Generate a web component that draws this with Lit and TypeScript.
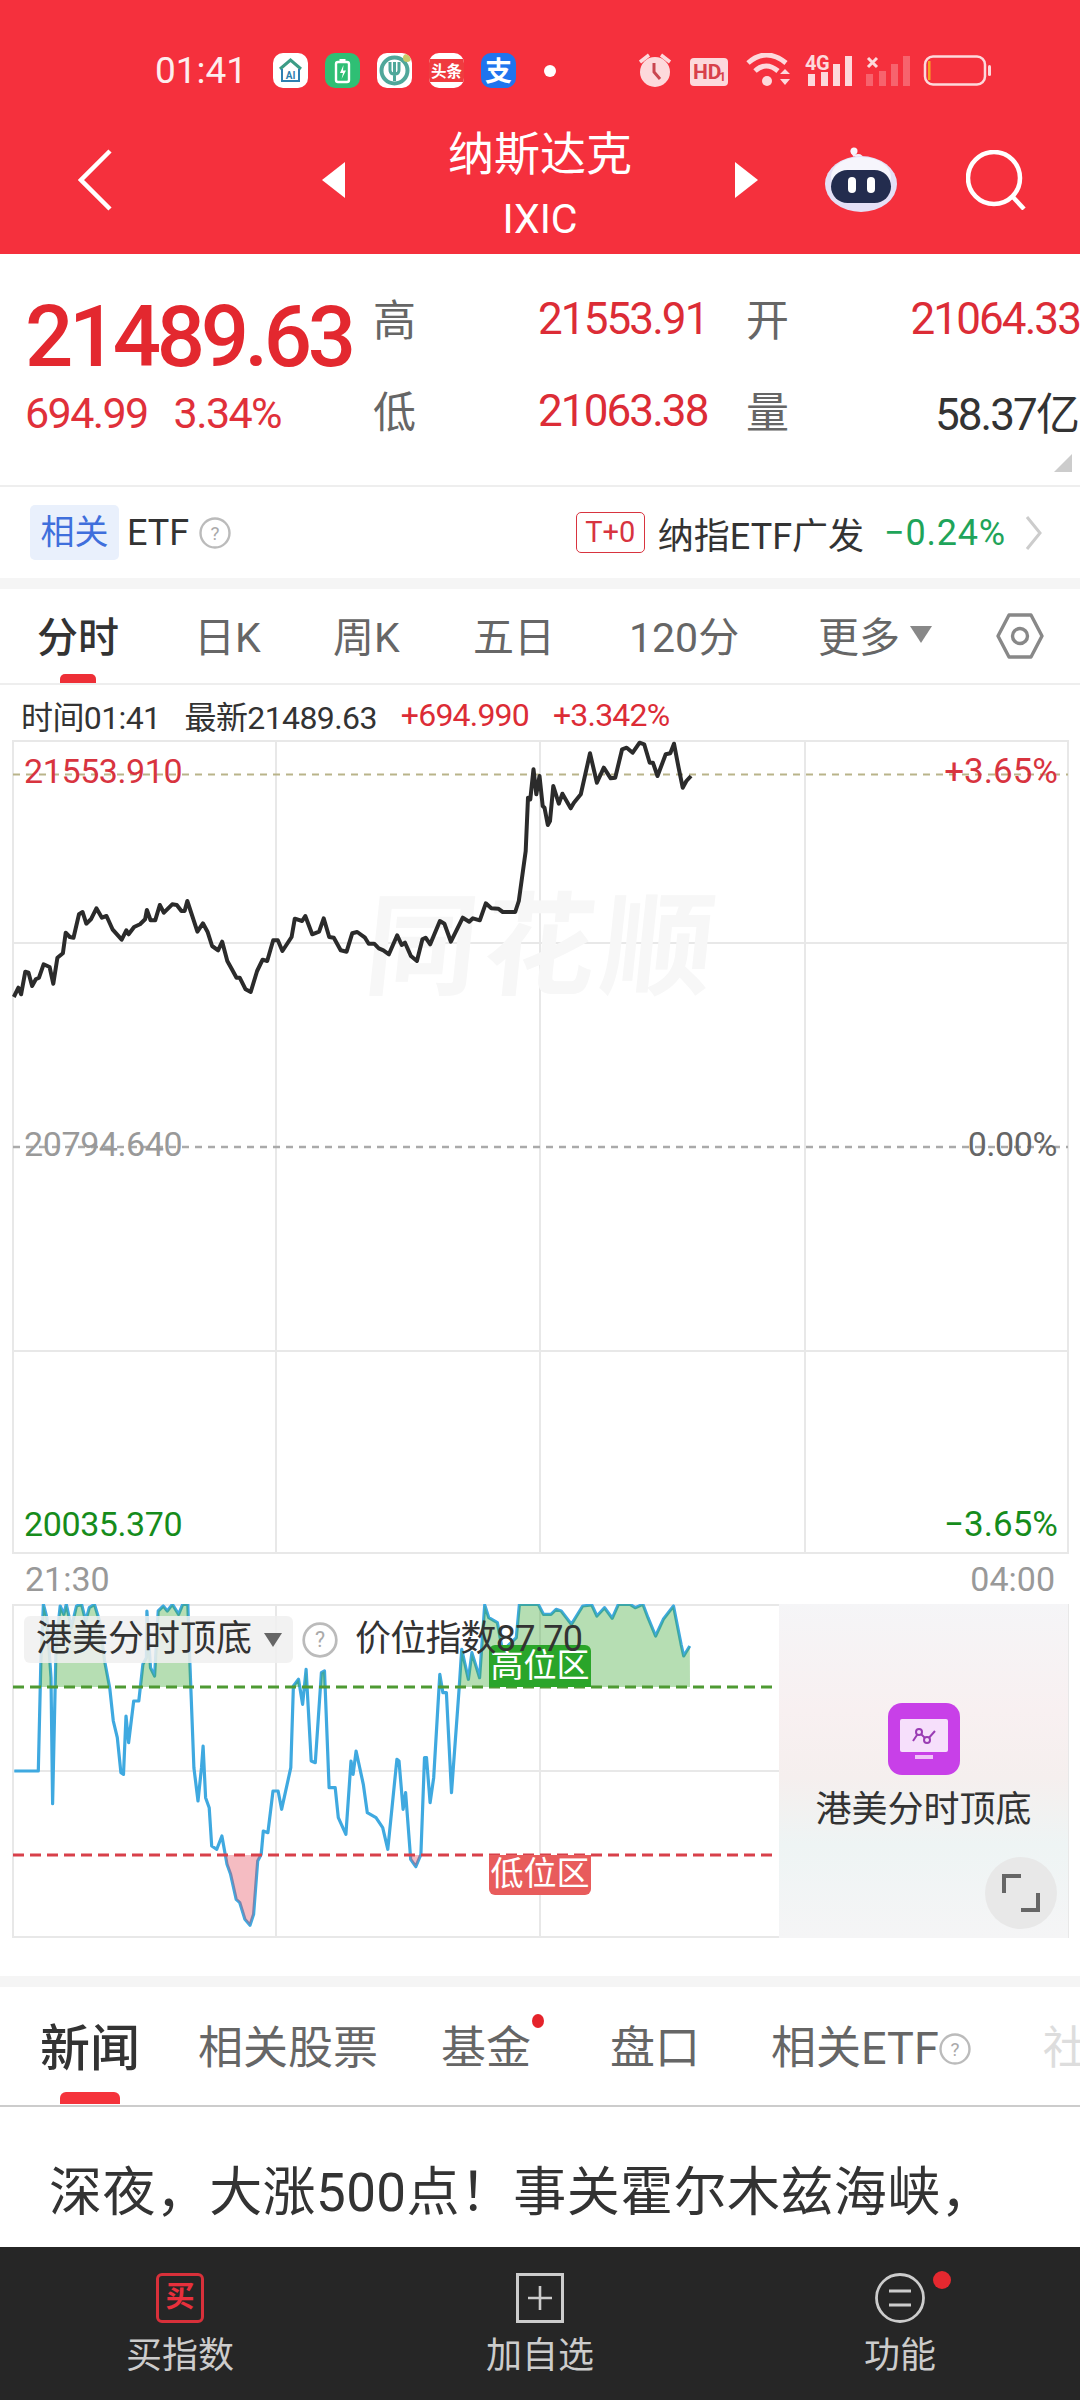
import { LitElement, css, html } from "lit";
import { customElement } from "lit/decorators.js";

// price line, sampled from the reference (x scaled 2.178, y scaled 3, from page y 720)
const PRICE = `30,828 40,800 46,820 55,752 62,755 70,795 78,775 85,770 95,730 108,738 116,788 125,710 137,697 143,635 152,648 160,650 172,580 180,573 188,608 198,595 210,562 222,590 232,585 245,625 265,656 275,628 280,640 292,618 305,610 316,595 320,567 328,598 338,598 348,552 357,575 375,550 385,552 395,570 402,570 408,540 420,590 430,632 442,607 452,632 462,675 475,688 484,662 495,720 505,745 515,770 522,770 535,805 546,813 560,750 572,716 582,720 595,658 605,658 615,690 635,648 642,593 658,600 665,585 680,640 695,632 705,592 717,648 727,650 742,688 755,692 767,637 778,633 795,650 803,668 815,668 825,682 835,688 847,700 865,643 875,672 882,665 895,705 908,720 920,655 927,650 937,670 958,600 968,608 982,662 1008,590 1022,602 1030,592 1045,598 1058,547 1070,562 1085,563 1095,573 1122,573 1130,540 1145,390 1150,230 1155,235 1162,145 1168,220 1175,165 1182,255 1186,260 1193,312 1198,300 1205,195 1217,248 1225,218 1243,262 1250,245 1265,220 1285,97 1300,185 1315,140 1330,172 1340,170 1355,85 1365,80 1378,95 1393,65 1403,70 1415,125 1422,125 1432,165 1450,100 1460,97 1468,68 1478,140 1487,200 1495,180 1505,165`;

// indicator line (x scaled 1.96, y scaled 3, from page y 1560)
const INDEX = `28,630 75,630 80,310 85,130 92,170 100,350 103,728 110,250 118,135 125,160 130,130 140,200 150,135 160,130 168,180 175,140 185,130 195,180 205,300 215,380 222,480 230,530 237,635 242,640 247,465 252,545 262,420 272,420 280,310 287,290 288,150 295,320 303,345 310,150 320,135 328,150 338,130 350,160 358,130 368,130 372,300 380,620 388,720 395,620 398,555 403,710 410,740 415,855 425,865 435,825 445,910 452,940 463,1015 470,1025 480,1075 490,1093 497,1060 505,900 512,880 516,810 525,815 535,690 545,690 552,745 570,620 575,375 585,355 593,430 600,325 610,600 618,605 630,335 636,330 645,680 657,680 663,770 678,820 688,600 692,640 698,570 712,670 720,755 737,770 750,800 760,865 778,595 782,600 790,745 795,695 805,895 815,917 825,880 832,590 836,590 843,725 850,650 862,340 868,395 875,395 885,695 900,380 905,265 918,355 925,275 940,350 950,132 958,170 975,185 985,270 1012,230 1018,130 1055,130 1065,160 1080,160 1090,145 1100,150 1120,190 1142,135 1160,132 1170,165 1185,140 1200,172 1212,130 1235,130 1245,140 1260,130 1270,170 1285,225 1300,175 1320,135 1335,250 1340,285 1352,255`;

const scalePts = (raw: string, sx: number, top: number) =>
  raw
    .split(" ")
    .map((p) => {
      const [x, y] = p.split(",").map(Number);
      return `${(x / sx).toFixed(1)},${(top + y / 3).toFixed(1)}`;
    })
    .join(" ");

const pricePts = scalePts(PRICE, 2.178, 720);
const indexPts = scalePts(INDEX, 1.96, 1560);

const help = (size: number) => html`<svg class="help" width=${size} height=${size} viewBox="0 0 32 32">
  <circle cx="16" cy="16" r="14.5" fill="none" stroke="#bbb" stroke-width="2.4"></circle>
  <text x="16" y="22.5" text-anchor="middle" font-size="19" fill="#aaa">?</text>
</svg>`;

@customElement("app-root")
export class AppRoot extends LitElement {
  static styles = css`
    :host {
      display: block;
      width: 1080px;
      height: 2400px;
      background: #fff;
      overflow: hidden;
      font-family: Roboto, "Noto Sans CJK SC", sans-serif;
      color: #333;
    }
    svg {
      display: block;
      flex: none;
    }
    .page {
      display: flex;
      flex-direction: column;
      height: 2400px;
    }
    .scroll {
      flex: 1;
      min-height: 0;
      overflow: hidden;
    }

    /* header */
    .header {
      height: 254px;
      background: #f5303d;
      color: #fff;
      display: flex;
      flex-direction: column;
    }
    .status {
      display: flex;
      align-items: center;
      height: 35px;
      margin-top: 53px;
      padding-left: 155px;
    }
    .clock {
      width: 90px;
      font-size: 37px;
      line-height: 37px;
      color: #fdeeee;
      white-space: nowrap;
    }
    .apps {
      display: flex;
      gap: 17px;
      margin-left: 28px;
    }
    .app {
      width: 35px;
      height: 35px;
      border-radius: 10px;
      overflow: hidden;
      background: #fff;
    }
    .dot {
      width: 12px;
      height: 12px;
      border-radius: 50%;
      background: #fff;
      margin-left: 28px;
    }
    .sys {
      margin-left: 83px;
    }
    .nav {
      flex: 1;
      display: flex;
      align-items: center;
      padding: 18px 0 0 78px;
    }
    .back {
      margin-right: 210px;
    }
    .title {
      align-self: flex-start;
      width: 390px;
      margin-top: 16px;
      text-align: center;
      line-height: 64px;
    }
    .title b {
      display: block;
      font-weight: 400;
      font-size: 46px;
    }
    .title span {
      display: block;
      font-size: 41px;
      padding-top: 1px;
    }
    .robot {
      margin-left: 67px;
    }
    .search {
      margin-left: 69px;
    }

    /* quote block */
    .stats {
      position: relative;
      height: 233px;
      box-sizing: border-box;
      padding: 10px 0 0 25px;
      border-bottom: 2px solid #eee;
      display: grid;
      grid-template-columns: 348px 165px 208px 1fr auto;
      grid-template-rows: 112px 72px;
      align-items: center;
    }
    .price {
      align-self: end;
      font-size: 85px;
      line-height: 78px;
      font-weight: 500;
      letter-spacing: -4.4px;
      color: #e3282f;
    }
    .change {
      display: flex;
      gap: 26px;
      padding-top: 2px;
      font-size: 43px;
      letter-spacing: -1.6px;
      color: #e0303a;
    }
    .lbl {
      font-size: 43px;
      padding-bottom: 7px;
      color: #666;
    }
    .val {
      font-size: 44px;
      padding-bottom: 2px;
      letter-spacing: -1.9px;
      color: #dc2c36;
    }
    .val.dark {
      color: #333;
      text-align: right;
      padding-right: 2px;
    }
    .corner {
      position: absolute;
      right: 8px;
      bottom: 13px;
      width: 0;
      height: 0;
      border-left: 18px solid transparent;
      border-bottom: 18px solid #ccc;
    }

    /* etf row */
    .etf {
      height: 91px;
      display: flex;
      align-items: center;
      padding: 0 38px 0 30px;
      font-size: 36px;
    }
    .chip {
      width: 89px;
      height: 55px;
      line-height: 55px;
      text-align: center;
      border-radius: 5px;
      background: #e9f0fc;
      color: #3f6fdc;
      font-size: 34px;
      margin-right: 8px;
    }
    .etf .help {
      margin-left: 10px;
    }
    .t0 {
      margin-left: auto;
      width: 69px;
      height: 41px;
      box-sizing: border-box;
      border: 1.5px solid #d8343f;
      border-radius: 5px;
      color: #d8343f;
      font-size: 29px;
      line-height: 38px;
      text-align: center;
      margin-right: 13px;
    }
    .fall {
      color: #1fa45a;
      margin: 0 19px 0 20px;
      letter-spacing: 0.8px;
    }
    .band {
      height: 11px;
      background: #f5f5f5;
      flex: none;
    }

    /* period tabs */
    .periods {
      height: 96px;
      box-sizing: border-box;
      border-bottom: 2px solid #eee;
      padding-left: 37px;
      display: grid;
      grid-template-columns: 157px 139px 140px 156px 189px 178px auto;
      align-items: center;
      font-size: 41px;
      color: #666;
    }
    .period {
      position: relative;
      display: flex;
      align-items: center;
      height: 100%;
      box-sizing: border-box;
      padding-bottom: 4px;
      white-space: nowrap;
    }
    .period.on {
      color: #333;
      font-weight: 500;
    }
    .period.on::after {
      content: "";
      position: absolute;
      left: 23px;
      bottom: 0;
      width: 36px;
      height: 9px;
      border-radius: 5px 5px 0 0;
      background: #ee2f37;
    }
    .caret {
      width: 0;
      height: 0;
      margin-left: 10px;
      border-left: 11px solid transparent;
      border-right: 11px solid transparent;
      border-top: 17px solid #888;
    }
    .readout {
      height: 55px;
      box-sizing: border-box;
      padding: 5px 0 0 21px;
      display: flex;
      align-items: center;
      gap: 24px;
      font-size: 32px;
      letter-spacing: -0.6px;
      color: #333;
    }
    .readout .up {
      letter-spacing: -0.8px;
      color: #dc2c36;
    }

    /* charts */
    .chart {
      width: 1080px;
      height: 814px;
    }
    .axis {
      height: 50px;
      display: flex;
      align-items: center;
      justify-content: space-between;
      padding: 0 25px;
      font-size: 34px;
      color: #999;
    }
    .sub {
      position: relative;
      height: 334px;
      margin-bottom: 38px;
    }
    .controls {
      position: absolute;
      left: 24px;
      top: 12px;
      height: 47px;
      display: flex;
      align-items: center;
      font-size: 36px;
      line-height: 47px;
      color: #333;
    }
    .picker {
      display: flex;
      align-items: center;
      width: 269px;
      height: 47px;
      box-sizing: border-box;
      padding-left: 12px;
      border-radius: 6px;
      background: rgba(240, 240, 240, 0.85);
    }
    .picker .caret {
      margin-left: 12px;
      border-left-width: 9px;
      border-right-width: 9px;
      border-top-width: 14px;
      border-top-color: #666;
    }
    .controls .help {
      margin: 0 17px 0 9px;
    }
    .controls span {
      letter-spacing: -0.8px;
    }
    .zone {
      position: absolute;
      left: 489px;
      width: 102px;
      text-align: center;
      font-size: 33px;
      color: #fff;
    }
    .zone.high {
      top: 41px;
      height: 42px;
      line-height: 41px;
      background: #2aa52a;
      border-radius: 6px 6px 0 0;
    }
    .zone.low {
      top: 251px;
      height: 40px;
      line-height: 38px;
      background: #e85c5c;
      border-radius: 0 0 6px 6px;
    }
    .promo {
      position: absolute;
      left: 779px;
      top: 0;
      width: 289px;
      height: 334px;
      display: flex;
      flex-direction: column;
      align-items: center;
      padding-top: 99px;
      box-sizing: border-box;
      font-size: 36px;
      color: #333;
      background: linear-gradient(180deg, #f5f5f7 0, #f8f0f1 32%, #f5efee 52%, #eef4f4 72%, #f5f5f6 100%);
    }
    .promo span {
      margin-top: 9px;
      line-height: 52px;
    }
    .expand {
      position: absolute;
      right: 11px;
      bottom: 9px;
      width: 72px;
      height: 72px;
      border-radius: 50%;
      background: #e8e8e8;
      display: flex;
      align-items: center;
      justify-content: center;
    }

    /* news */
    .news-tabs {
      position: relative;
      height: 120px;
      box-sizing: border-box;
      border-bottom: 2px solid #ccc;
      padding: 6px 0 0 40px;
      display: flex;
      align-items: center;
      font-size: 45px;
      line-height: 60px;
      color: #666;
      white-space: nowrap;
    }
    .news-tabs > span {
      position: relative;
      flex: none;
    }
    .news-tabs .on {
      font-size: 50px;
      font-weight: 500;
      color: #333;
      margin-right: 58px;
    }
    .news-tabs .on::after {
      content: "";
      position: absolute;
      left: 20px;
      bottom: -25px;
      width: 60px;
      height: 12px;
      border-radius: 6px 6px 0 0;
      background: #f5333c;
    }
    .news-tabs .fund {
      margin: 0 79px 0 63px;
    }
    .fund::after {
      content: "";
      position: absolute;
      right: -13px;
      top: -5px;
      width: 12px;
      height: 14px;
      border-radius: 50%;
      background: #e5232b;
    }
    .related {
      display: flex;
      align-items: center;
      margin-left: 71px;
    }
    .fade {
      margin-left: 72px;
      color: #ddd;
    }
    .headline {
      padding: 45px 0 0 49px;
      font-size: 53px;
      line-height: 82px;
      letter-spacing: 0.4px;
      color: #333;
      white-space: nowrap;
    }

    /* bottom bar */
    .bar {
      flex: none;
      height: 153px;
      background: #262626;
      display: grid;
      grid-template-columns: 360px 360px 360px;
      color: #ccc;
      font-size: 36px;
    }
    .bar-item {
      position: relative;
      display: flex;
      flex-direction: column;
      align-items: center;
      padding-top: 26px;
    }
    .bar-item span {
      margin-top: 8px;
      line-height: 50px;
    }
    .buy {
      width: 48px;
      height: 50px;
      box-sizing: border-box;
      border: 3px solid #d8303a;
      border-radius: 6px;
      color: #e8303c;
      font-size: 29px;
      font-weight: 700;
      line-height: 42px;
      text-align: center;
    }
    .badge {
      position: absolute;
      left: 213px;
      top: 24px;
      width: 18px;
      height: 18px;
      border-radius: 50%;
      background: #e5282f;
    }
  `;

  private statusApps() {
    return html`<div class="apps">
      <div class="app">
        <svg width="35" height="35" viewBox="0 0 35 35">
          <path d="M7 16 L17.5 7 L28 16" fill="none" stroke="#3c9c86" stroke-width="3"></path>
          <path d="M9 16 V28 H26 V16" fill="none" stroke="#2f7fb0" stroke-width="2"></path>
          <text x="17.5" y="26" text-anchor="middle" font-size="10" font-weight="700" fill="#2f7fb0">AI</text>
        </svg>
      </div>
      <div class="app" style="background:#2fbf74">
        <svg width="35" height="35" viewBox="0 0 35 35">
          <rect x="11" y="9" width="13" height="20" rx="2" fill="none" stroke="#fff" stroke-width="2.4"></rect>
          <rect x="14.5" y="6" width="6" height="3" fill="#fff"></rect>
          <path d="M18.5 12 L15 20 H18 L16.5 26 L21 17.5 H18 Z" fill="#fff"></path>
        </svg>
      </div>
      <div class="app">
        <svg width="35" height="35" viewBox="0 0 35 35">
          <circle cx="17.5" cy="17.5" r="13" fill="none" stroke="#4fa79a" stroke-width="4"></circle>
          <path d="M13 9 V17 Q13 21 17.5 21 Q22 21 22 17 V9 M17.5 9 V28" fill="none" stroke="#4fa79a" stroke-width="3"></path>
          <circle cx="30" cy="5" r="4" fill="#c9c96a"></circle>
        </svg>
      </div>
      <div class="app">
        <svg width="35" height="35" viewBox="0 0 35 35">
          <rect y="6" width="35" height="23" fill="#ef3b3f"></rect>
          <text x="17.5" y="23.5" text-anchor="middle" font-size="15.5" font-weight="700" fill="#fff">头条</text>
        </svg>
      </div>
      <div class="app" style="background:#1f74ee">
        <svg width="35" height="35" viewBox="0 0 35 35">
          <text x="17.5" y="27.5" text-anchor="middle" font-size="27" font-weight="700" fill="#fff">支</text>
        </svg>
      </div>
    </div>`;
  }

  private systemIcons() {
    const on = "#fdd9dc";
    return html`<svg class="sys" width="352" height="35" viewBox="640 53 352 35">
      <circle cx="656" cy="72" r="15" fill=${on}></circle>
      <path d="M641 62 L650 55 M671 62 L662 55" stroke=${on} stroke-width="3.5"></path>
      <path d="M655 63 V72 L661 79" fill="none" stroke="#c94650" stroke-width="3"></path>
      <rect x="691" y="58" width="38" height="28" rx="4" fill=${on}></rect>
      <text x="694" y="79" font-size="21" font-weight="700" fill="#d8404a">HD</text>
      <text x="720" y="81" font-size="12" font-weight="700" fill="#d8404a">1</text>
      <path d="M749 63 Q767 47 787 63" fill="none" stroke=${on} stroke-width="5"></path>
      <path d="M756 71 Q767 61 779 71" fill="none" stroke=${on} stroke-width="5"></path>
      <circle cx="768" cy="81" r="5" fill=${on}></circle>
      <path d="M781 74 L786 69 L791 74 Z M781 79 L791 79 L786 85 Z" fill=${on}></path>
      <text x="806" y="70" font-size="20" font-weight="700" letter-spacing="-0.5" fill=${on}>4G</text>
      <rect x="809" y="74" width="7" height="12" fill=${on}></rect>
      <rect x="822" y="72" width="7" height="14" fill=${on}></rect>
      <rect x="834" y="64" width="7" height="22" fill=${on}></rect>
      <rect x="846" y="56" width="7" height="30" fill=${on}></rect>
      <path d="M869 58 L878 67 M878 58 L869 67" stroke=${on} stroke-width="3"></path>
      <g fill=${on} opacity="0.3">
        <rect x="867" y="74" width="7" height="12"></rect>
        <rect x="880" y="71" width="7" height="15"></rect>
        <rect x="892" y="64" width="7" height="22"></rect>
        <rect x="904" y="56" width="7" height="30"></rect>
      </g>
      <rect x="926" y="56.5" width="60" height="28" rx="8" fill="none" stroke=${on} stroke-width="2.5"></rect>
      <rect x="929" y="61" width="2.5" height="19" fill="#f5a623"></rect>
      <rect x="989" y="65" width="3" height="11" rx="1.5" fill=${on}></rect>
    </svg>`;
  }

  private navBar() {
    return html`<div class="nav">
      <svg class="back" width="34" height="62" viewBox="0 0 34 62">
        <path d="M32 2 L3 31 L32 60" fill="none" stroke="#fff" stroke-width="4.5"></path>
      </svg>
      <svg width="23" height="36" viewBox="0 0 23 36"><path d="M23 0 V36 L0 18 Z" fill="#fff"></path></svg>
      <div class="title"><b>纳斯达克</b><span>IXIC</span></div>
      <svg width="23" height="36" viewBox="0 0 23 36"><path d="M0 0 V36 L23 18 Z" fill="#fff"></path></svg>
      <svg class="robot" width="72" height="66" viewBox="0 0 72 66">
        <path d="M30 9 Q25 4 29 2 M30 9 Q36 7 37 12" fill="none" stroke="#f2f0fa" stroke-width="3"></path>
        <circle cx="29" cy="4" r="3.5" fill="#f7f6fc"></circle>
        <ellipse cx="36" cy="37" rx="36" ry="28" fill="#e4e0f6"></ellipse>
        <ellipse cx="36" cy="30" rx="30" ry="20" fill="#f6f5fc"></ellipse>
        <rect x="6" y="23" width="60" height="33" rx="16.5" fill="#232c4e"></rect>
        <rect x="23" y="30" width="8" height="16" rx="4" fill="#fff"></rect>
        <rect x="42" y="30" width="8" height="16" rx="4" fill="#fff"></rect>
      </svg>
      <svg class="search" width="60" height="60" viewBox="0 0 60 60">
        <circle cx="28" cy="28" r="26" fill="none" stroke="#fff" stroke-width="4.5"></circle>
        <path d="M46 46 L58 59" stroke="#fff" stroke-width="4.5"></path>
      </svg>
    </div>`;
  }

  private priceChart() {
    const label = "font-size:34px;letter-spacing:-0.4px";
    return html`<svg class="chart" viewBox="0 739 1080 814">
      <g stroke="#e8e8e8" stroke-width="2" fill="none">
        <rect x="13" y="740" width="1055" height="812"></rect>
        <path d="M276 740 V1552 M540 740 V1552 M805 740 V1552 M13 942 H1068 M13 1350 H1068"></path>
      </g>
      <text transform="translate(362 985) skewX(-6)" style="font-size:112px;letter-spacing:6px;font-weight:700" fill="#f7f7f7">同花顺</text>
      <path d="M13 773.5 H1068" stroke="#b9b48a" stroke-width="2" stroke-dasharray="7 6"></path>
      <path d="M13 1146 H1068" stroke="#aaa" stroke-width="2.5" stroke-dasharray="7 6"></path>
      <polyline points=${pricePts} fill="none" stroke="#2b2b2b" stroke-width="4" stroke-linejoin="round"></polyline>
      <text x="24" y="782" style=${label} fill="#d8343f">21553.910</text>
      <text x="24" y="1155" style=${label} fill="#999">20794.640</text>
      <text x="24" y="1535" style=${label} fill="#168c1c">20035.370</text>
      <text x="1058" y="782" text-anchor="end" style="font-size:35px" fill="#d8343f">+3.65%</text>
      <text x="1057" y="1155" text-anchor="end" style=${label} fill="#666">0.00%</text>
      <text x="1058" y="1535" text-anchor="end" style="font-size:35px" fill="#168c1c">−3.65%</text>
    </svg>`;
  }

  private indexChart() {
    const top = 1603;
    return html`<div class="sub">
      <svg width="1080" height="334" viewBox="0 ${top} 1080 334">
        <defs>
          <clipPath id="above"><rect x="0" y=${top} width="1080" height="83"></rect></clipPath>
          <clipPath id="below"><rect x="0" y="1854" width="1080" height="83"></rect></clipPath>
        </defs>
        <g stroke="#e8e8e8" stroke-width="2" fill="none">
          <rect x="13" y=${top + 1} width="1055" height="332"></rect>
          <path d="M276 ${top} V1937 M540 ${top} V1937 M13 1770 H1068"></path>
        </g>
        <polyline points=${indexPts} fill="none" stroke="#3fa9e0" stroke-width="3.2" stroke-linejoin="round"></polyline>
        <polygon points="${indexPts} 690,1686 14,1686" fill="rgba(56,165,50,0.37)" clip-path="url(#above)"></polygon>
        <polygon points="${indexPts} 690,1854 14,1854" fill="rgba(228,70,85,0.36)" clip-path="url(#below)"></polygon>
        <path d="M13 1686 H775" stroke="#4e9a33" stroke-width="3" stroke-dasharray="11 6"></path>
        <path d="M13 1854 H775" stroke="#d8404a" stroke-width="3" stroke-dasharray="11 6"></path>
      </svg>
      <div class="zone high">高位区</div>
      <div class="zone low">低位区</div>
      <div class="controls">
        <div class="picker">港美分时顶底<i class="caret"></i></div>
        ${help(36)}
        <span>价位指数87.70</span>
      </div>
      <div class="promo">
        <svg width="72" height="72" viewBox="0 0 72 72">
          <rect width="72" height="72" rx="14" fill="#c840e8"></rect>
          <rect x="12" y="16" width="48" height="33" rx="2" fill="#f6dffb"></rect>
          <rect x="27" y="52" width="18" height="4" fill="#f0c4f8"></rect>
          <path d="M25 38 L31 29 L39 37 L47 28" fill="none" stroke="#9a3cb4" stroke-width="2"></path>
          <circle cx="31" cy="29" r="3" fill="#f6dffb" stroke="#9a3cb4" stroke-width="2"></circle>
          <circle cx="39" cy="37" r="3" fill="#f6dffb" stroke="#9a3cb4" stroke-width="2"></circle>
        </svg>
        <span>港美分时顶底</span>
        <div class="expand">
          <svg width="38" height="38" viewBox="0 0 38 38">
            <path d="M2 19 V2 H19 M19 36 H36 V19" fill="none" stroke="#666" stroke-width="4"></path>
          </svg>
        </div>
      </div>
    </div>`;
  }

  render() {
    return html`<div class="page">
      <div class="header">
        <div class="status">
          <div class="clock">01:41</div>
          ${this.statusApps()}
          <div class="dot"></div>
          ${this.systemIcons()}
        </div>
        ${this.navBar()}
      </div>

      <div class="scroll">
        <div class="stats">
          <div class="price">21489.63</div>
          <div class="lbl">高</div>
          <div class="val">21553.91</div>
          <div class="lbl">开</div>
          <div class="val">21064.33</div>
          <div class="change"><span>694.99</span><span>3.34%</span></div>
          <div class="lbl">低</div>
          <div class="val">21063.38</div>
          <div class="lbl">量</div>
          <div class="val dark">58.37亿</div>
          <i class="corner"></i>
        </div>

        <div class="etf">
          <div class="chip">相关</div>
          <span>ETF</span>
          ${help(32)}
          <div class="t0">T+0</div>
          <span>纳指ETF广发</span>
          <span class="fall">−0.24%</span>
          <svg width="17" height="34" viewBox="0 0 17 34">
            <path d="M2 1 L15 17 L2 33" fill="none" stroke="#ccc" stroke-width="3"></path>
          </svg>
        </div>
        <div class="band"></div>

        <div class="periods">
          <div class="period on">分时</div>
          <div class="period">日K</div>
          <div class="period">周K</div>
          <div class="period">五日</div>
          <div class="period">120分</div>
          <div class="period">更多<i class="caret"></i></div>
          <svg width="48" height="46" viewBox="0 0 48 46">
            <path d="M13 2 H35 L46 23 L35 44 H13 L2 23 Z" fill="none" stroke="#888" stroke-width="3.4" stroke-linejoin="round"></path>
            <circle cx="24" cy="23" r="7.5" fill="none" stroke="#888" stroke-width="3.4"></circle>
          </svg>
        </div>
        <div class="readout">
          <span>时间01:41</span>
          <span>最新21489.63</span>
          <span class="up">+694.990</span>
          <span class="up">+3.342%</span>
        </div>

        ${this.priceChart()}
        <div class="axis"><span>21:30</span><span>04:00</span></div>
        ${this.indexChart()}
        <div class="band"></div>

        <div class="news-tabs">
          <span class="on">新闻</span>
          <span>相关股票</span>
          <span class="fund">基金</span>
          <span>盘口</span>
          <span class="related">相关ETF${help(32)}</span>
          <span class="fade">社区</span>
        </div>
        <div class="headline">
          深夜，大涨500点！事关霍尔木兹海峡，<br />特朗普最新表态，国际油价大幅跳水！
        </div>
      </div>

      <div class="bar">
        <div class="bar-item">
          <div class="buy">买</div>
          <span>买指数</span>
        </div>
        <div class="bar-item">
          <svg width="48" height="50" viewBox="0 0 48 50">
            <rect x="1.5" y="1.5" width="45" height="47" fill="none" stroke="#ccc" stroke-width="3"></rect>
            <path d="M24 13 V37 M12 25 H36" stroke="#ccc" stroke-width="2.6"></path>
          </svg>
          <span>加自选</span>
        </div>
        <div class="bar-item">
          <svg width="50" height="50" viewBox="0 0 50 50">
            <circle cx="25" cy="25" r="23.5" fill="none" stroke="#ccc" stroke-width="2.8"></circle>
            <path d="M14 18 H36 M14 32 H36" stroke="#ccc" stroke-width="3"></path>
          </svg>
          <span>功能</span>
          <i class="badge"></i>
        </div>
      </div>
    </div>`;
  }
}
